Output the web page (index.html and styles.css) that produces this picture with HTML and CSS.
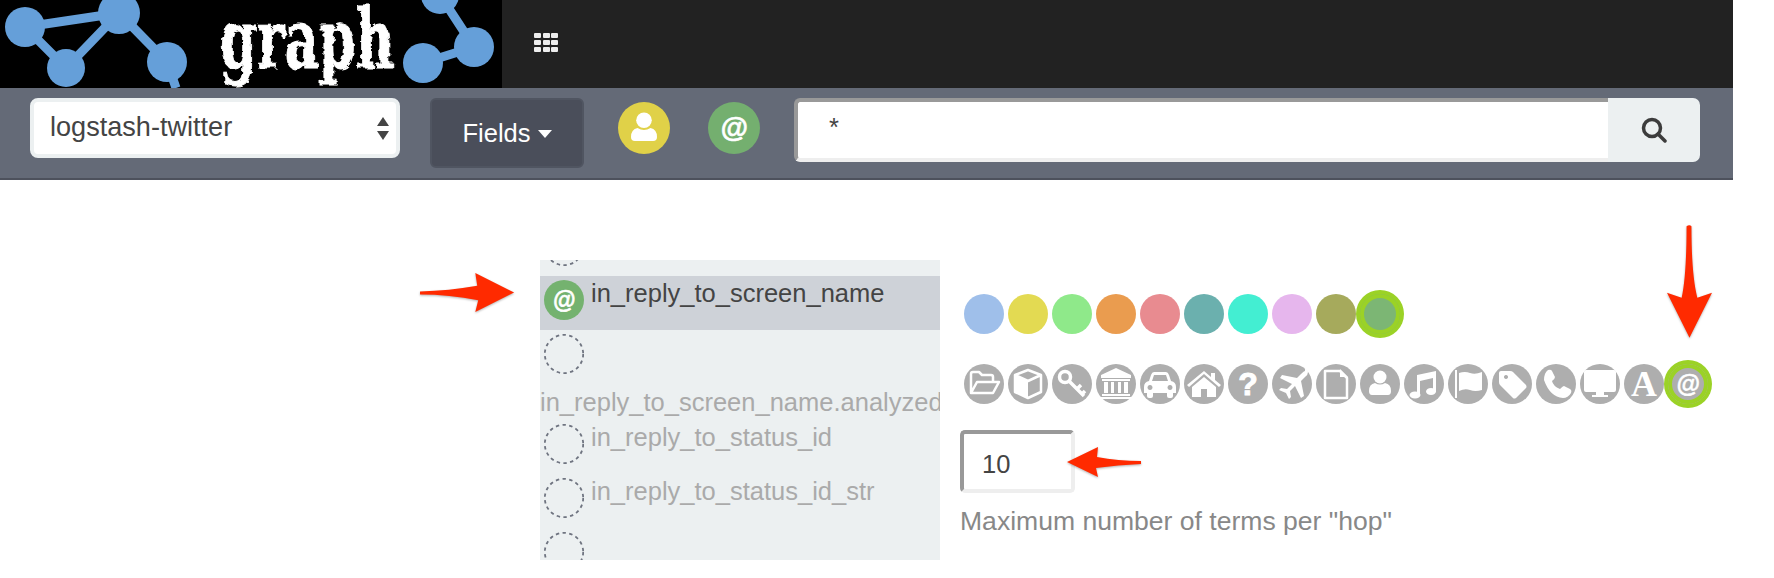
FILE: index.html
```html
<!DOCTYPE html>
<html lang="en">
<head>
<meta charset="utf-8">
<title>Graph</title>
<link rel="stylesheet" href="styles.css">
</head>
<body>
<header class="topbar">
  <svg class="logo" viewBox="0 0 502 88" aria-label="graph logo">
    <defs>
      <filter id="rough" x="-5%" y="-5%" width="110%" height="110%">
        <feTurbulence type="fractalNoise" baseFrequency="0.09 0.16" numOctaves="2" seed="4"/>
        <feDisplacementMap in="SourceGraphic" scale="6"/>
        <feGaussianBlur stdDeviation="0.5"/>
      </filter>
    </defs>
    <rect class="logo-bg" width="502" height="88"/>
    <g class="logo-lines">
      <path d="M25 27L119 13L66 68ZM119 13L167 62L176 88M423 63L474 47L440 -5"/>
    </g>
    <g class="logo-nodes">
      <circle cx="25" cy="27" r="20"/>
      <circle cx="119" cy="13" r="21"/>
      <circle cx="66" cy="68" r="19"/>
      <circle cx="167" cy="62" r="20"/>
      <circle cx="423" cy="63" r="20"/>
      <circle cx="474" cy="47" r="20"/>
      <circle cx="440" cy="-5" r="19"/>
    </g>
    <text class="logo-text" x="220" y="68" textLength="174" lengthAdjust="spacingAndGlyphs" filter="url(#rough)">graph</text>
  </svg>
  <div class="apps">
    <i></i><i></i><i></i><i></i><i></i><i></i><i></i><i></i><i></i>
  </div>
</header>

<nav class="toolbar">
  <div class="select">
    <span>logstash-twitter</span>
    <span class="updown"><i class="up"></i><i class="down"></i></span>
  </div>
  <button class="fields">Fields <i class="caret"></i></button>
  <span class="dot yellow">
    <svg viewBox="0 0 40 40"><circle cx="20" cy="14" r="6"/><path d="M10 27q0-6 5-7 5 3 10 0 5 1 5 7 0 3-3 3H13q-3 0-3-3z"/></svg>
  </span>
  <span class="dot green at">@</span>
  <div class="search">
    <div class="search-input">*</div>
    <button class="search-btn" aria-label="Search">
      <svg viewBox="0 0 26 26"><circle cx="11" cy="11" r="8.500"/><path d="M17 17l7 7"/></svg>
    </button>
  </div>
</nav>

<main class="content">
  <section class="field-list">
    <div class="field-scroll">
      <div class="row"><svg class="ring" viewBox="0 0 40 40"><circle cx="20" cy="20" r="19.200"/></svg></div>
      <div class="row active"><span class="dot small green at">@</span><span class="label">in_reply_to_screen_name</span></div>
      <div class="row long"><svg class="ring" viewBox="0 0 40 40"><circle cx="20" cy="20" r="19.200"/></svg><span class="label">in_reply_to_screen_name.analyzed</span></div>
      <div class="row"><svg class="ring" viewBox="0 0 40 40"><circle cx="20" cy="20" r="19.200"/></svg><span class="label">in_reply_to_status_id</span></div>
      <div class="row"><svg class="ring" viewBox="0 0 40 40"><circle cx="20" cy="20" r="19.200"/></svg><span class="label">in_reply_to_status_id_str</span></div>
      <div class="row"><svg class="ring" viewBox="0 0 40 40"><circle cx="20" cy="20" r="19.200"/></svg></div>
    </div>
  </section>

  <section class="settings">
    <div class="swatches">
      <span class="swatch c1"></span><span class="swatch c2"></span><span class="swatch c3"></span><span class="swatch c4"></span><span class="swatch c5"></span><span class="swatch c6"></span><span class="swatch c7"></span><span class="swatch c8"></span><span class="swatch c9"></span><span class="swatch c10 picked"></span>
    </div>
    <div class="swatches icons">
      <span class="swatch grey"><svg viewBox="0 0 40 40"><path class="line" d="M7 29V10q0-2 2-2h6l3 3h9q2 0 2 2v5M7 29l6-11h22l-6 11z"/></svg></span>
      <span class="swatch grey"><svg viewBox="0 0 40 40"><path class="line" d="M20 6l13 5v17l-13 6-13-6V11zM7 11l13 6 13-6"/><path d="M7 11l13 6v17l-13-6z"/></svg></span>
      <span class="swatch grey"><svg viewBox="0 0 40 40"><circle class="line thick" cx="13" cy="13" r="5.500"/><path class="line thick" d="M17 17l15 15M25 25l4-4M30 30l3-3"/></svg></span>
      <span class="swatch grey"><svg viewBox="0 0 40 40"><path d="M20 4l15 7v3H5v-3zM6 15h28v2H6zM8 18h4v11H8zM15 18h3v11h-3zM22 18h3v11h-3zM28 18h4v11h-4zM6 30h28v2H6zM4 33h32v2H4z"/></svg></span>
      <span class="swatch grey"><svg viewBox="0 0 40 40"><path fill-rule="evenodd" d="M11 11q1-3 3-3h12q2 0 3 3l2 6q5 1 5 6v6h-3v3q0 2-2 2h-2q-2 0-2-2v-3H13v3q0 2-2 2H9q-2 0-2-2v-3H4v-6q0-5 5-6zM14 11l-2 6h16l-2-6zM10 21a2.500 2.500 0 1 0 .01 0zM30 21a2.500 2.500 0 1 0 .01 0z"/></svg></span>
      <span class="swatch grey"><svg viewBox="0 0 40 40"><path d="M20 7l7 6V9h4v7l6 5-2 2L20 10 5 23l-2-2zM20 13l12 10v10h-9v-8h-6v8H8V23z"/></svg></span>
      <span class="swatch grey glyph q">?</span>
      <span class="swatch grey"><svg viewBox="0 0 40 40"><path d="M33 5q3 0 3 3 0 3-3 5l-4 4 3 15-3 2-6-12-5 5 1 6-2 2-3-6-7-3 2-2 6 1 5-5-12-6 2-3 15 3 4-4q3-3 4-3z"/></svg></span>
      <span class="swatch grey"><svg viewBox="0 0 40 40"><path class="line" d="M9 7h15l7 7v20H9z"/><path d="M24 5l8 8h-8z"/></svg></span>
      <span class="swatch grey"><svg viewBox="0 0 40 40"><circle cx="20" cy="13" r="6.500"/><path d="M9 27q0-7 6-8 5 3 10 0 6 1 6 8 0 4-3 4H12q-3 0-3-4z"/></svg></span>
      <span class="swatch grey"><svg viewBox="0 0 40 40"><path d="M13 11l19-4v21h-3V14l-13 3v14h-3z"/><ellipse cx="11" cy="31" rx="5.500" ry="3.500"/><ellipse cx="27" cy="27.500" rx="5" ry="3.500"/></svg></span>
      <span class="swatch grey"><svg viewBox="0 0 40 40"><path d="M7 6h2v28H7zM11 9q6-2 11 0t12-1v18q-7 2-12 0t-11 1z"/></svg></span>
      <span class="swatch grey"><svg viewBox="0 0 40 40"><path fill-rule="evenodd" d="M9 7h9q2 0 3 1l13 13q1 2 0 3L24 34q-2 1-3 0L8 21q-1-1-1-3V9q0-2 2-2zM14 11a2 2 0 1 0 .01 0z"/></svg></span>
      <span class="swatch grey"><svg viewBox="0 0 40 40"><path d="M12 6q3-1 4 1l3 6q0 2-3 4 1 5 8 8 3-3 4-3l6 3q2 1 1 4-3 5-8 5Q14 33 8 16 8 9 12 6z"/></svg></span>
      <span class="swatch grey"><svg viewBox="0 0 40 40"><path d="M6 6h28q2 0 2 2v18q0 2-2 2H24v3h4v2H12v-2h4v-3H6q-2 0-2-2V8q0-2 2-2z"/></svg></span>
      <span class="swatch grey glyph serif">A</span>
      <span class="swatch grey picked glyph at-glyph">@</span>
    </div>
    <div class="number">10</div>
    <p class="help">Maximum number of terms per "hop"</p>
  </section>
</main>

<svg class="arrow arrow-left" viewBox="0 0 100 42"><path d="M0 20Q30 19 59 14L57 1 97 21 57 41 60 29Q30 23 0 23z"/></svg>
<svg class="arrow arrow-down" viewBox="0 0 48 118"><path d="M21 2q3-2 5 0 0 50 6 73l15-5-23 46L1 70l15 5q5-23 5-73z"/></svg>
<svg class="arrow arrow-back" viewBox="0 0 76 32"><path d="M75 15Q52 15 31 11L32 1 1 16 32 31 30 22Q52 19 75 18z"/></svg>
</body>
</html>
```

FILE: styles.css
```css
* { box-sizing: border-box; }

html, body { margin: 0; padding: 0; }

body {
  position: relative;
  height: 578px;
  overflow: hidden;
  background: #fff;
  font-family: "Liberation Sans", Arial, sans-serif;
  color: #444;
}

svg { display: block; }

.topbar {
  width: 1733px;
  height: 88px;
  background: #222;
  display: flex;
  align-items: center;
}

.logo { width: 502px; height: 88px; }
.logo-bg { fill: #000; }
.logo-lines path { fill: none; stroke: #659fd9; stroke-width: 9; }
.logo-nodes circle { fill: #659fd9; }
.logo-text {
  fill: #fff;
  stroke: #fff;
  stroke-width: 1px;
  font-family: "DejaVu Serif", serif;
  font-weight: 700;
  font-size: 82px;
}

.apps {
  margin-left: 32px;
  margin-top: -3px;
  display: grid;
  grid-template-columns: repeat(3, 7px);
  grid-auto-rows: 5.500px;
  gap: 1.500px 1.500px;
}
.apps i { background: #eee; border-radius: 1px; }

.toolbar {
  width: 1733px;
  height: 92px;
  background: #646a77;
  border-bottom: 2px solid #4d515c;
  padding: 10px 33px 0 30px;
  display: flex;
  align-items: flex-start;
}

.select {
  width: 370px;
  height: 60px;
  background: #fff;
  border: 4px solid #ecf0f1;
  border-radius: 8px;
  padding: 0 7px 2px 16px;
  display: flex;
  align-items: center;
  justify-content: space-between;
  font-size: 27.100px;
  color: #444;
}
.updown { display: flex; flex-direction: column; gap: 5px; margin-top: 2px; }
.updown i {
  display: block;
  width: 0;
  height: 0;
  border-left: 6.500px solid transparent;
  border-right: 6.500px solid transparent;
}
.updown .up { border-bottom: 9px solid #444; }
.updown .down { border-top: 9px solid #444; }

.fields {
  width: 154px;
  height: 70px;
  margin-left: 30px;
  background: #4a4e5a;
  border: 2px solid #505561;
  border-radius: 6px;
  color: #fff;
  font: 25.500px "Liberation Sans", Arial, sans-serif;
  padding: 0;
  display: flex;
  align-items: center;
  justify-content: center;
  gap: 7px;
}
.caret {
  width: 0;
  height: 0;
  border-left: 7.500px solid transparent;
  border-right: 7.500px solid transparent;
  border-top: 8px solid #fff;
  margin-top: 2px;
}

.dot {
  width: 52px;
  height: 52px;
  border-radius: 50%;
  margin-top: 4px;
  display: flex;
  align-items: center;
  justify-content: center;
  flex: none;
}
.dot svg { width: 52px; height: 52px; fill: #fff; }
.yellow { background: #e0d148; margin-left: 34px; }
.green { background: #74af6f; margin-left: 38px; }
.at {
  color: #fff;
  font-size: 28px;
  font-weight: 700;
  font-style: italic;
  -webkit-text-stroke: 0.6px #fff;
}

.search {
  width: 906px;
  height: 64px;
  margin-left: 34px;
  display: flex;
}
.search-input {
  width: 814px;
  background: #fff;
  border-style: solid;
  border-width: 4px 0 4px 4px;
  border-color: #999 #eee #eee #999;
  border-radius: 6px 0 0 6px;
  padding: 10px 0 0 31px;
  font-size: 25.500px;
  line-height: 30px;
  color: #444;
}
.search-btn {
  width: 92px;
  background: #ecf0f1;
  border: 0;
  border-radius: 0 7px 7px 0;
  padding: 0;
  display: flex;
  align-items: center;
  justify-content: center;
}
.search-btn svg {
  width: 26px;
  height: 26px;
  fill: none;
  stroke: #3c3c3c;
  stroke-width: 3.500px;
  stroke-linecap: round;
}

.content {
  display: flex;
  align-items: flex-start;
  padding-left: 540px;
}

.field-list {
  width: 400px;
  height: 300px;
  margin-top: 80px;
  background: #ecf0f1;
  overflow: hidden;
  flex: none;
}
.field-scroll { margin-top: -38px; }

.row {
  min-height: 54px;
  padding: 4px 0 10px 4px;
  display: flex;
  flex-wrap: wrap;
  align-items: flex-start;
  column-gap: 7px;
  color: #aaa;
  font-size: 25.500px;
}
.row.active { background: #ced2d8; color: #444; }
.row.long { padding-bottom: 0; }

.label {
  margin-top: -5px;
  line-height: 36px;
  white-space: nowrap;
}
.long .label { margin: 10px 0 0 -4px; }

.ring {
  width: 40px;
  height: 40px;
  flex: none;
  fill: none;
  stroke: #6f7480;
  stroke-width: 1.800px;
  stroke-dasharray: 3.400 3.400;
}

.dot.small {
  width: 40px;
  height: 40px;
  margin: 0;
  font-size: 23px;
  background: #74b26f;
}

.settings {
  margin-left: 20px;
  padding-top: 114px;
  width: 760px;
  flex: none;
}

.swatches { display: flex; gap: 4px; margin-left: 4px; height: 40px; }
.swatches.icons { margin-top: 30px; }

.swatch {
  width: 40px;
  height: 40px;
  border-radius: 50%;
  flex: none;
  display: flex;
  align-items: center;
  justify-content: center;
}
.swatch svg { width: 40px; height: 40px; fill: #fff; }
.swatch .line { fill: none; stroke: #fff; stroke-width: 2.500px; stroke-linejoin: round; }
.swatch .thick { stroke-width: 3.500px; }

.c1 { background: #9fbfea; }
.c2 { background: #e3da52; }
.c3 { background: #8fe98a; }
.c4 { background: #ea9c4f; }
.c5 { background: #e88b90; }
.c6 { background: #6bb0ae; }
.c7 { background: #43eed2; }
.c8 { background: #e6b6ed; }
.c9 { background: #a6aa5c; }
.c10 { background: #7cb674; }
.grey { background: #aeaeae; }

.picked { box-shadow: inset 0 0 0 4px #9bd226, 0 0 0 4px #9bd226; }

.glyph { color: #fff; font-weight: 700; }
.q { font-size: 32px; -webkit-text-stroke: 1px #fff; }
.serif { font-family: "Liberation Serif", serif; font-size: 36px; }
.at-glyph { font-size: 24px; font-style: italic; -webkit-text-stroke: 0.5px #fff; }

.number {
  width: 115px;
  height: 63px;
  margin-top: 26px;
  border-style: solid;
  border-width: 4px;
  border-color: #999 #eee #eee #999;
  border-radius: 5px;
  padding-left: 18px;
  font-size: 25.500px;
  line-height: 60px;
  color: #444;
}

.help {
  margin: 10px 0 0;
  font-size: 26.550px;
  line-height: 36px;
  color: #888;
}

.arrow { position: absolute; fill: #ff2a00; filter: drop-shadow(0 1px 1px rgba(0, 0, 0, .3)); }
.arrow-left { left: 420px; top: 272px; width: 97px; height: 41px; }
.arrow-down { left: 1666px; top: 224px; width: 47px; height: 116px; }
.arrow-back { left: 1066px; top: 446px; width: 76px; height: 32px; }
```
